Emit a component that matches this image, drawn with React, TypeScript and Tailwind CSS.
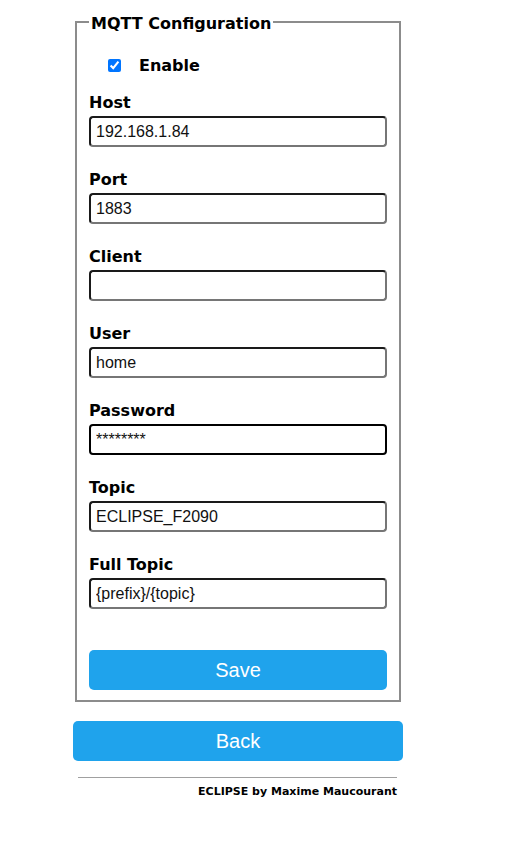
import React, { useEffect, useRef } from "react";

const fields = [
  { label: "Host", value: "192.168.1.84" },
  { label: "Port", value: "1883" },
  { label: "Client", value: "" },
  { label: "User", value: "home" },
  { label: "Password", value: "********", focus: true },
  { label: "Topic", value: "ECLIPSE_F2090" },
  { label: "Full Topic", value: "{prefix}/{topic}" },
];

const bold = "font-['DejaVu_Sans',sans-serif] font-bold";

function Field({ label, value, focus }: { label: string; value: string; focus?: boolean }) {
  const ref = useRef<HTMLInputElement>(null);

  useEffect(() => {
    if (focus && ref.current) {
      ref.current.focus();
      ref.current.setSelectionRange(value.length, value.length);
    }
  }, [focus, value]);

  return (
    <div className="pt-[2px] pb-[21px]">
      <div className={`${bold} text-[16px] leading-[19px] text-black mb-[4px]`}>{label}</div>
      <input
        ref={ref}
        type="text"
        defaultValue={value}
        className={`block w-[298px] h-[31px] px-[5px] rounded-[4px] border-2 font-['Liberation_Sans',Arial,sans-serif] text-[16px] text-[#111] outline-none ${
          focus
            ? "border-black"
            : "border-t-[#1a1a1a] border-l-[#1a1a1a] border-b-[#767676] border-r-[#767676]"
        }`}
      />
    </div>
  );
}

export default function App() {
  return (
    <div className="min-h-screen bg-white pt-[10px]">
      <div className="ml-[73px] w-[330px]">
        <fieldset className="mx-[2px] border-2 border-[#8c8c8c] px-[12px] pb-[10px]">
          <legend className={`${bold} px-[2px] pt-[4px] text-[16px] leading-[19px] text-black`}>
            MQTT Configuration
          </legend>
          <div className="mt-[23px] mb-[16px] flex h-[19px] items-center">
            <input
              type="checkbox"
              defaultChecked
              className="ml-[19px] h-[13px] w-[13px] accent-[#0075ff]"
            />
            <span className={`${bold} ml-[18px] text-[16px] leading-[19px] text-black`}>Enable</span>
          </div>
          {fields.map((f) => (
            <Field key={f.label} {...f} />
          ))}
          <button className="mt-[20px] block h-[40px] w-[298px] rounded-[5px] bg-[#1fa3ec] font-['Liberation_Sans',Arial,sans-serif] text-[20px] text-white">
            Save
          </button>
        </fieldset>
        <button className="mt-[19px] block h-[40px] w-[330px] rounded-[5px] bg-[#1fa3ec] font-['Liberation_Sans',Arial,sans-serif] text-[20px] text-white">
          Back
        </button>
        <div className="ml-[5px] mr-[6px] mt-[16px] border-t border-[#a0a0a0]" />
        <div className={`${bold} mr-[6px] mt-[7px] text-right text-[11px] leading-[13px] text-black`}>
          ECLIPSE by Maxime Maucourant
        </div>
      </div>
    </div>
  );
}
